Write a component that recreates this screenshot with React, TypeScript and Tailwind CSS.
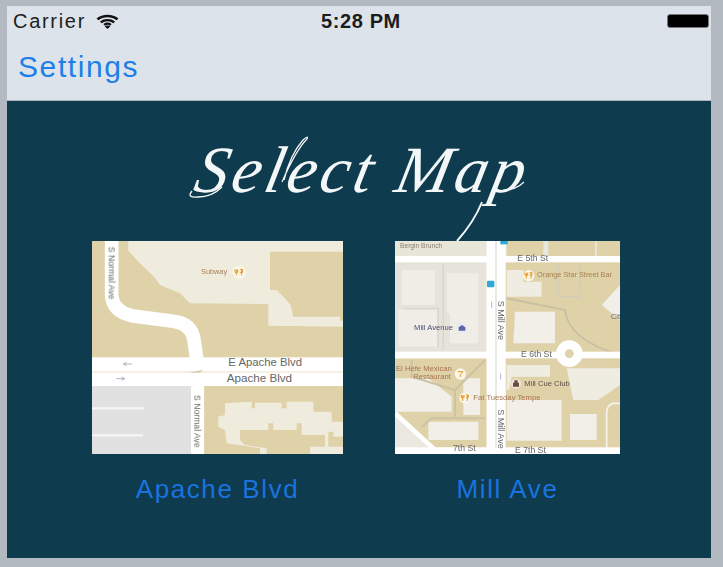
const sans = { fontFamily: '"Liberation Sans", Arial, sans-serif' };

function MapOne() {
  return (
    <svg viewBox="36 33 753 639" className="block h-[213px] w-[251px] blur-[0.6px]" style={sans}>
      <rect x="36" y="33" width="753" height="639" fill="#dfd2a9" />
      <path d="M145 33H789V65H570V180L590 180 610 200 632 225 640 260H780V272L789 272V290L565 287V222L330 220 300 190 240 165 222 140 175 95 145 62Z" fill="#f0ecdd" />
      <path d="M95 33V195Q97 245 160 258L280 274Q335 280 342 330L350 385" fill="none" stroke="#fff" strokeWidth="41" />
      <rect x="36" y="382" width="753" height="43" fill="#fff" />
      <rect x="36" y="427" width="753" height="41" fill="#fff" />
      <path d="M325 428L370 419 360 428Z" fill="#d9cda8" />
      <rect x="36" y="468" width="297" height="204" fill="#e1e1e1" />
      <rect x="36" y="532" width="155" height="6" fill="#f8f8f8" />
      <rect x="36" y="613" width="152" height="6" fill="#f8f8f8" />
      <rect x="333" y="468" width="40" height="204" fill="#fff" />
      <path d="M373 468H789V672H373Z" fill="#dfd2a9" />
      <path d="M435 520L515 515V535H525V518H605V535H620V515H700V545L755 545V575H789V672H540V655L440 640 435 600 415 590V560L435 555Z" fill="#f0ecdd" />
      <path d="M480 600H565V580H580V600H650V580H665V615H735V650H690V672H560V655L495 645 480 630Z" fill="#dfd2a9" />
      <path d="M745 605H760V620H789V650H745Z" fill="#dfd2a9" />
      <path d="M130 402H156M130 402L140 397M130 402L140 407" stroke="#aeb6c4" strokeWidth="3" fill="none" />
      <path d="M135 446H109M135 446L125 441M135 446L125 451" stroke="#aeb6c4" strokeWidth="3" fill="none" />
      <text x="445" y="407" fontSize="34" fill="#666">E Apache Blvd</text>
      <text x="440" y="457" fontSize="35" fill="#666">Apache Blvd</text>
      <text transform="translate(86 50) rotate(90)" fontSize="26" fill="#666">S Normal Ave</text>
      <text transform="translate(343 495) rotate(90)" fontSize="26" fill="#666">S Normal Ave</text>
      <text x="363" y="132" fontSize="22" fill="#a58058">Subway</text>
      <circle cx="478" cy="127" r="20" fill="#faf6ea" />
      <path d="M469 118V136M473 118V127H465V118M485 118V136M480 118H488V127H480" stroke="#e59a22" strokeWidth="3" fill="none" />
    </svg>
  );
}

function MapTwo() {
  return (
    <svg viewBox="30 33 675 639" className="block h-[213px] w-[225px] blur-[0.6px]" style={sans}>
      <rect x="30" y="33" width="675" height="639" fill="#e9e7dd" />
      <path d="M360 95H705V672H360Z" fill="#dfd2a9" />
      <path d="M490 33H630V78H490ZM635 33H705V78H635ZM365 33H475V78H365Z" fill="#dfd2a9" />
      <path d="M30 33H305V78H30Z" fill="#e8e5d9" />
      <path d="M30 95H300V365H30Z" fill="#e6e4da" />
      <path d="M50 120H150V225H50ZM185 130H280V340H195V250H185ZM40 240H155V350H40Z" fill="#efede5" />
      <path d="M55 235H160V350M175 100V360" stroke="#d8d6cd" strokeWidth="4" fill="none" />
      <path d="M30 385H305V672H30Z" fill="#dfd2a9" />
      <path d="M30 445H130L200 500V545H30ZM235 445H285V555H235ZM130 575H280V630H130Z" fill="#f1efe7" />
      <path d="M30 555L150 665H305V672H30Z" fill="#ebe9df" />
      <path d="M30 550L150 660H320" stroke="#fff" strokeWidth="14" fill="none" />
      <path d="M80 390V440L210 480 300 390M210 480V560M110 590L140 565H300" stroke="#cdc3a3" strokeWidth="6" fill="none" />
      <path d="M365 120H415V155H470V200H365Z" fill="#efece1" />
      <path d="M520 95V200H585V95" stroke="#d3cdb8" strokeWidth="5" fill="none" />
      <path d="M365 205L540 240Q550 330 705 375" stroke="#c9c0a4" strokeWidth="6" fill="none" />
      <path d="M390 245H510V340H385Z" fill="#f1efe7" />
      <path d="M705 165L650 225 705 270Z" fill="#f1efe7" />
      <path d="M365 405H495V440H380L372 480 365 480ZM545 415H705V465L640 510H565Z" fill="#efece1" />
      <path d="M365 510H530V632H365ZM555 552H635V630H555Z" fill="#f1efe7" />
      <path d="M705 520H685Q665 525 665 550V670" stroke="#f5f3eb" strokeWidth="5" fill="none" />
      <rect x="30" y="78" width="675" height="19" fill="#fff" />
      <rect x="30" y="365" width="675" height="20" fill="#fff" />
      <circle cx="553" cy="371" r="40" fill="#fff" />
      <circle cx="553" cy="371" r="13" fill="#dfd2a9" />
      <rect x="305" y="33" width="25" height="639" fill="#fff" />
      <rect x="336" y="33" width="26" height="639" fill="#fff" />
      <rect x="330" y="33" width="6" height="639" fill="#e8e8e4" />
      <rect x="30" y="652" width="675" height="20" fill="#fff" />
      <rect x="306" y="152" width="22" height="20" rx="3" fill="#2da8d8" />
      <rect x="346" y="33" width="22" height="10" fill="#2da8d8" />
      <text x="397" y="94" fontSize="26" fill="#666">E 5th St</text>
      <text x="408" y="382" fontSize="26" fill="#666">E 6th St</text>
      <text x="204" y="663" fontSize="26" fill="#666">7th St</text>
      <text x="390" y="669" fontSize="26" fill="#666">E 7th St</text>
      <text transform="translate(340 212) rotate(90)" fontSize="27" fill="#666">S Mill Ave</text>
      <text transform="translate(340 538) rotate(90)" fontSize="27" fill="#666">S Mill Ave</text>
      <text x="456" y="142" fontSize="22" fill="#a9804f">Orange Star Street Bar</text>
      <text x="87" y="300" fontSize="23" fill="#4a4f78">Mill Avenue</text>
      <text x="33" y="423" fontSize="23" fill="#a9744f">El Hefe Mexican</text>
      <text x="85" y="446" fontSize="23" fill="#a9744f">Restaurant</text>
      <text x="418" y="467" fontSize="23" fill="#5e5048">Mill Cue Club</text>
      <text x="265" y="510" fontSize="23" fill="#a9744f">Fat Tuesday Tempe</text>
      <text x="678" y="268" fontSize="22" fill="#666">Cit</text>
      <text x="45" y="55" fontSize="20" fill="#8a7f70">Bergin Brunch</text>
      <circle cx="231" cy="295" r="16" fill="#e9eaf4" />
      <path d="M221 302V292L231 285 241 292V302Z" fill="#5c65a8" />
      <circle cx="431" cy="137" r="17" fill="#faf6ea" />
      <path d="M424 128V146M428 128V136H420V128M438 128V146M434 128H441V136H434" stroke="#e59a22" strokeWidth="3" fill="none" />
      <circle cx="240" cy="504" r="17" fill="#faf6ea" />
      <path d="M233 495V513M237 495V503H229V495M247 495V513M243 495H250V503H243" stroke="#e59a22" strokeWidth="3" fill="none" />
      <circle cx="226" cy="432" r="17" fill="#faf6ea" />
      <path d="M218 425H234L226 433V441" stroke="#e59a22" strokeWidth="3" fill="none" />
      <circle cx="393" cy="461" r="15" fill="#ece8dc" />
      <path d="M384 470V458H402V470ZM388 458V451H398V458" fill="#6a4a42" />
      <path d="M320 215V235" stroke="#aeb6d8" strokeWidth="3" />
      <path d="M347 430V448" stroke="#aeb6d8" strokeWidth="3" />
    </svg>
  );
}

function MapCard({ label, children }: { label: string; children: React.ReactNode }) {
  return (
    <div className="flex flex-col items-center">
      {children}
      <span className="mt-[21px] text-[26px] leading-[28px] tracking-[1.6px] text-[#1a73de]" style={sans}>
        {label}
      </span>
    </div>
  );
}

export default function App() {
  return (
    <div className="h-[567px] w-[723px] overflow-hidden bg-[#b2b9c1] pt-[6px] pr-[12px] pb-[9px] pl-[7px]">
      <div className="flex h-[552px] flex-col bg-[#0f3b4e]">
        <header className="h-[95px] shrink-0 border-b border-[#aab4bd] bg-[#dce3ea]">
          <div className="grid h-[24px] grid-cols-[1fr_auto_1fr] items-center pl-[6px] pr-[2px]">
            <div className="flex items-center">
              <span className="text-[20px] tracking-[1.7px] text-[#1c1c1c]" style={sans}>Carrier</span>
              <svg viewBox="0 0 24 18" preserveAspectRatio="none" className="ml-[10px] h-[15px] w-[23px]">
                <path d="M1.5 6.5C7.5 1 16.5 1 22.5 6.5M5 10C9 6.5 15 6.5 19 10M8.5 13C10.5 11.4 13.5 11.4 15.5 13" fill="none" stroke="#111" strokeWidth="2.8" />
                <path d="M12 18L9 14.6Q12 13 15 14.6Z" fill="#111" />
              </svg>
            </div>
            <span className="text-[20px] font-bold tracking-[0.6px] text-[#1c1c1c]" style={sans}>5:28 PM</span>
            <div className="h-[14px] w-[42px] justify-self-end rounded-[3px] border border-[#777] bg-black" />
          </div>
          <div className="pl-[11px] pt-[19px]">
            <span className="text-[30px] leading-[36px] tracking-[1.6px] text-[#1f7fe8]" style={sans}>Settings</span>
          </div>
        </header>
        <main className="flex flex-1 flex-col">
          <div className="relative z-10 mt-[26px] h-[114px]">
            <h1
              className="-mt-[7px] ml-[179px] w-fit origin-bottom-left -skew-x-12 text-[66px] font-normal italic leading-[100px] tracking-[3.8px] text-[#f4f7f8]"
              style={{ fontFamily: '"Liberation Serif", "Times New Roman", serif' }}
            >
              Select Map
            </h1>
            <svg viewBox="7 127 704 127" className="absolute left-0 top-0 h-[127px] w-[704px]" fill="none" stroke="#f4f7f8">
              <path d="M192 191Q186 198 198 197Q212 197 222 187" strokeWidth="1.3" />
              <path d="M282 182Q296 150 307 139Q309 135 303 140Q290 155 284 180" strokeWidth="1.2" />
              <path d="M482 202Q474 222 457 241" strokeWidth="2" />
              <path d="M503 190Q516 190 524 182" strokeWidth="1.2" />
            </svg>
          </div>
          <div className="flex gap-[52px] pl-[85px]">
            <MapCard label="Apache Blvd"><MapOne /></MapCard>
            <MapCard label="Mill Ave"><MapTwo /></MapCard>
          </div>
        </main>
      </div>
    </div>
  );
}
